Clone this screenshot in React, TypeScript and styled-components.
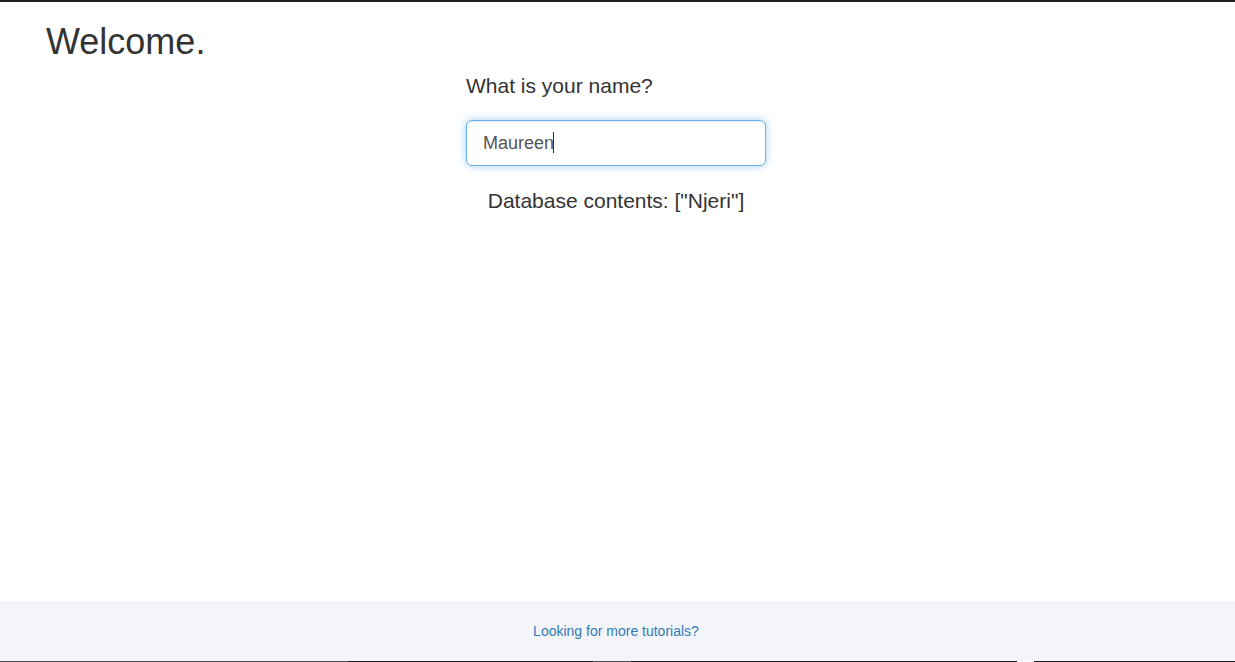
import React from "react";
import styled, { createGlobalStyle } from "styled-components";

const GlobalStyle = createGlobalStyle`
  html, body {
    margin: 0;
    padding: 0;
    background: #ffffff;
  }
  body {
    font-family: "Liberation Sans", Arial, Helvetica, sans-serif;
    color: #333333;
  }
  * { box-sizing: border-box; }
`;

const Page = styled.div`
  min-height: 100vh;
  display: flex;
  flex-direction: column;
  border-top: 2px solid #1a1f24;
`;

const Header = styled.header`
  padding: 20px 46px 0;
`;

const Title = styled.h1`
  margin: 0;
  font-size: 36px;
  font-weight: 400;
  line-height: 40px;
  color: #333333;
`;

const Main = styled.main`
  flex: 1;
  display: flex;
  justify-content: center;
`;

const Column = styled.form`
  width: 300px;
  display: flex;
  flex-direction: column;
  margin-left: -3px;
`;

const Label = styled.label`
  font-size: 21px;
  line-height: 24px;
  margin-top: 12px;
  color: #333333;
`;

const InputWrap = styled.div`
  position: relative;
  margin-top: 22px;
  width: 300px;
  height: 46px;
`;

const NameInput = styled.input`
  width: 300px;
  height: 46px;
  padding: 0 16px;
  font-family: "Liberation Sans", Arial, Helvetica, sans-serif;
  font-size: 18px;
  color: #555555;
  caret-color: transparent;
  background: #ffffff;
  border: 1px solid #66afe9;
  border-radius: 6px;
  outline: none;
  box-shadow: inset 0 1px 1px rgba(0, 0, 0, 0.075), 0 0 8px rgba(102, 175, 233, 0.6);
`;

const Caret = styled.span`
  position: absolute;
  top: 12px;
  width: 1px;
  height: 21px;
  background: #333333;
  pointer-events: none;
`;

const Contents = styled.p`
  margin: 23px 0 0;
  font-size: 21px;
  line-height: 24px;
  text-align: center;
  color: #333333;
`;

const Footer = styled.footer`
  height: 61px;
  padding-bottom: 1px;
  display: flex;
  align-items: center;
  justify-content: center;
  background: #f4f5f9;
  position: relative;
  &::after {
    content: "";
    position: absolute;
    left: 0;
    right: 0;
    bottom: 0;
    height: 1px;
    background: linear-gradient(
      to right,
      #4a4d52 0px,
      #4a4d52 348px,
      #1a1c20 348px,
      #1a1c20 593px,
      #4a4d52 593px,
      #4a4d52 631px,
      #1a1c20 631px,
      #1a1c20 1017px,
      #ffffff 1017px,
      #ffffff 1034px,
      #1a1c20 1034px
    );
  }
`;

const FooterLink = styled.a`
  font-size: 14px;
  line-height: 20px;
  color: #337ab7;
  text-decoration: none;
  margin-left: -3px;
`;

export default function App() {
  const [name, setName] = React.useState("Maureen");
  const caretLeft = 17 + name.length * 10;
  return (
    <>
      <GlobalStyle />
      <Page>
        <Header>
          <Title>Welcome.</Title>
        </Header>
        <Main>
          <Column onSubmit={(e) => e.preventDefault()}>
            <Label htmlFor="name">What is your name?</Label>
            <InputWrap>
              <NameInput
                id="name"
                value={name}
                onChange={(e) => setName(e.target.value)}
              />
              <Caret style={{ left: caretLeft }} />
            </InputWrap>
            <Contents>Database contents: ["Njeri"]</Contents>
          </Column>
        </Main>
        <Footer>
          <FooterLink href="#">Looking for more tutorials?</FooterLink>
        </Footer>
      </Page>
    </>
  );
}
